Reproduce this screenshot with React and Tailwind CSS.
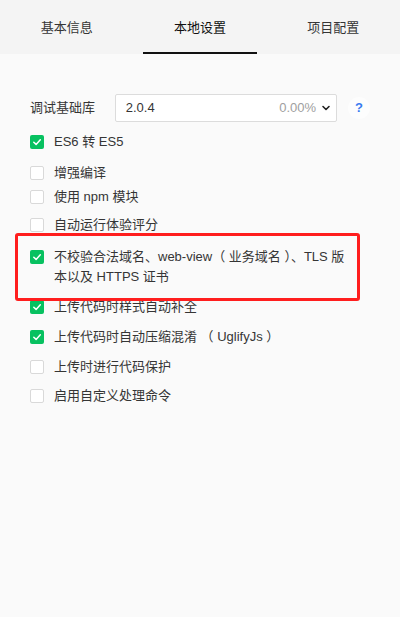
import React, { useState } from "react";

const tabs = ["基本信息", "本地设置", "项目配置"];

const options = [
  { label: "ES6 转 ES5", checked: true, mt: "mt-[10px]" },
  { label: "增强编译", checked: false, mt: "mt-[11px]" },
  { label: "使用 npm 模块", checked: false, mt: "mt-[4px]" },
  { label: "自动运行体验评分", checked: false, mt: "mt-[8px]" },
  {
    label: "不校验合法域名、web-view（ 业务域名 ）、TLS 版本以及 HTTPS 证书",
    checked: true,
    mt: "mt-[12px]",
  },
  { label: "上传代码时样式自动补全", checked: true, mt: "mt-[10px]" },
  { label: "上传代码时自动压缩混淆 （ UglifyJs ）", checked: true, mt: "mt-[10px]" },
  { label: "上传时进行代码保护", checked: false, mt: "mt-[10px]" },
  { label: "启用自定义处理命令", checked: false, mt: "mt-[9px]" },
];

const Checkbox = ({ checked, onClick }) => (
  <button
    type="button"
    onClick={onClick}
    className={
      checked
        ? "mt-[3px] w-[14px] h-[14px] shrink-0 rounded-[2px] bg-[#07c160] flex items-center justify-center"
        : "mt-[3px] w-[14px] h-[14px] shrink-0 rounded-[2px] bg-white border border-[#d9d9d9]"
    }
  >
    {checked && (
      <svg width="10" height="10" viewBox="0 0 10 10" fill="none">
        <path d="M1.8 5.2 L4.1 7.4 L8.3 2.8" stroke="white" strokeWidth="1.5" strokeLinecap="round" strokeLinejoin="round" />
      </svg>
    )}
  </button>
);

const App = () => {
  const [active, setActive] = useState(1);
  const [checks, setChecks] = useState(options.map((o) => o.checked));

  const toggle = (i) => {
    setChecks((prev) => prev.map((c, idx) => (idx === i ? !c : c)));
  };

  return (
    <div className="relative w-[400px] h-[617px] bg-[#fafafa] text-[13px] text-[#353535] font-['Liberation_Sans','Noto_Sans_CJK_SC',sans-serif]">
      {/* tabs */}
      <div className="flex h-[54px] bg-[#f4f4f4]">
        {tabs.map((t, i) => (
          <button
            key={t}
            type="button"
            onClick={() => setActive(i)}
            className="flex-1 flex flex-col"
          >
            <span
              className={
                i === active
                  ? "flex-1 flex items-center justify-center text-[#111] pt-[3px]"
                  : "flex-1 flex items-center justify-center pt-[3px]"
              }
            >
              {t}
            </span>
            <span
              className={
                i === active
                  ? "block w-[114px] h-[2px] mx-auto bg-[#111]"
                  : "block w-[114px] h-[2px] mx-auto"
              }
            />
          </button>
        ))}
      </div>

      {/* settings */}
      <div className="px-[30px]">
        <div className="flex items-center mt-[40px] h-[28px]">
          <span className="w-[85px]">调试基础库</span>
          <div className="w-[223px] h-[28px] bg-white border border-[#dcdcdc] rounded-[2px] flex items-center pl-[10px] pr-[5px]">
            <span className="flex-1">2.0.4</span>
            <span className="text-[#a0a0a0]">0.00%</span>
            <svg width="10" height="10" viewBox="0 0 10 10" className="ml-[5px]">
              <path d="M2 3.5 L5 6.5 L8 3.5" stroke="#222" strokeWidth="1.6" fill="none" strokeLinecap="round" strokeLinejoin="round" />
            </svg>
          </div>
          <span className="ml-[11px] w-[22px] h-[22px] rounded-full bg-[#fdfdfd] flex items-center justify-center text-[#3a7bf0] font-bold">
            ?
          </span>
        </div>

        <div className="flex flex-col">
          {options.map((o, i) => (
            <div key={o.label} className={`flex items-start gap-[10px] ${o.mt}`}>
              <Checkbox checked={checks[i]} onClick={() => toggle(i)} />
              <span className="leading-[20px] w-[296px]">{o.label}</span>
            </div>
          ))}
        </div>
      </div>

      {/* annotation */}
      <div className="absolute top-[233px] left-[15px] w-[345px] h-[68px] border-[3.5px] border-[#ff1e1e] rounded-[3px] pointer-events-none" />
    </div>
  );
};

export default App;
